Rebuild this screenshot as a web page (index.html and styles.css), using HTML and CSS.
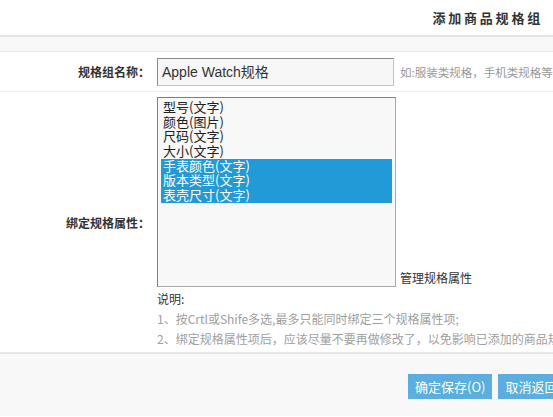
FILE: index.html
```html
<!DOCTYPE html>
<html lang="zh">
<head>
<meta charset="utf-8">
<link rel="stylesheet" href="styles.css">
</head>
<body>
<div class="page">
  <div class="header"><h1 class="title">添加商品规格组</h1></div>
  <div class="band"></div>
  <div class="row row-name">
    <div class="label">规格组名称：</div>
    <div class="field">
      <div class="input">Apple Watch规格</div>
      <span class="hint">如:服装类规格，手机类规格等</span>
    </div>
  </div>
  <div class="row row-attr">
    <div class="label">绑定规格属性：</div>
    <div class="field col">
      <div class="select-line">
        <div class="listbox">
          <div class="opt">型号(文字)</div>
          <div class="opt">颜色(图片)</div>
          <div class="opt">尺码(文字)</div>
          <div class="opt">大小(文字)</div>
          <div class="opt sel">手表颜色(文字)</div>
          <div class="opt sel">版本类型(文字)</div>
          <div class="opt sel">表壳尺寸(文字)</div>
        </div>
        <span class="manage">管理规格属性</span>
      </div>
      <div class="notes">
        <div class="note-title">说明:</div>
        <div class="note">1、按Crtl或Shife多选,最多只能同时绑定三个规格属性项;</div>
        <div class="note">2、绑定规格属性项后，应该尽量不要再做修改了，以免影响已添加的商品规格属性</div>
      </div>
    </div>
  </div>
  <div class="footer">
    <button class="btn">确定保存(O)</button>
    <button class="btn">取消返回</button>
  </div>
</div>
</body>
</html>
```
FILE: styles.css
```css
html, body {
  margin: 0;
  padding: 0;
  background: #fff;
  overflow: hidden;
}
body {
  font-family: "Noto Sans CJK SC", "Liberation Sans", sans-serif;
  color: #333;
  width: 553px;
  height: 417px;
}
.page {
  width: 553px;
  overflow: hidden;
}
.header {
  height: 35px;
  border-bottom: 2px solid #e3e3e3;
  display: flex;
  justify-content: flex-end;
  align-items: center;
}
.title {
  margin: 0 10px 0 0;
  font-size: 13px;
  font-weight: bold;
  letter-spacing: 2.8px;
  color: #333;
  line-height: 1;
}
.band {
  height: 14px;
  background: #f8f8f8;
  border-bottom: 1px solid #e6e6e6;
}
.row {
  display: flex;
  border-bottom: 1px solid #ececec;
}
.label {
  width: 150px;
  flex: none;
  text-align: right;
  font-size: 12px;
  font-weight: bold;
  color: #333;
  align-self: center;
}
.field {
  margin-left: 7px;
  display: flex;
  align-items: center;
  white-space: nowrap;
}
.row-name {
  height: 39px;
}
.row-name .field {
  padding-top: 1px;
}
.input {
  width: 231px;
  height: 26px;
  border: 1px solid #c4c4c4;
  border-top-color: #8a8a8a;
  border-left-color: #8a8a8a;
  background: #f7f7f7;
  font-family: "Liberation Sans", "Noto Sans CJK SC", sans-serif;
  font-size: 14px;
  line-height: 26px;
  padding-left: 4px;
  color: #333;
}
.hint {
  margin-left: 6px;
  font-size: 11.5px;
  color: #999;
}
.row-attr {
  height: 260px;
  border-bottom: 2px solid #e6e6e6;
}
.col {
  flex-direction: column;
  align-items: flex-start;
  padding-top: 5px;
}
.select-line {
  display: flex;
  align-items: flex-end;
}
.listbox {
  border: 1px solid #a9a9a9;
  border-top-color: #7f7f7f;
  border-left-color: #7f7f7f;
  background: #f8f8f8;
  padding: 2px 3px 0 3px;
  box-sizing: border-box;
  height: 190px;
  width: 239px;
}
.opt {
  font-size: 13px;
  line-height: 14.7px;
  height: 14.7px;
  padding-left: 2px;
  color: #222;
}
.opt.sel {
  background: #229ad7;
  color: #fff;
}
.manage {
  margin-left: 4px;
  font-size: 12px;
  line-height: 14px;
  margin-bottom: 2px;
}
.notes {
  margin-top: 2px;
  font-size: 12px;
  line-height: 20px;
}
.note-title {
  color: #333;
}
.note {
  font-size: 12px;
  color: #a0a0a0;
}
.footer {
  height: 62px;
  background: #f8f8f8;
  display: flex;
  align-items: flex-start;
  padding: 20px 0 0 408px;
  box-sizing: border-box;
  gap: 6px;
  white-space: nowrap;
}
.btn {
  flex: none;
  height: 25px;
  padding: 0 7px;
  border: 0;
  background: #5aaee0;
  color: #fff;
  font-family: "Noto Sans CJK SC", sans-serif;
  font-size: 13px;
  letter-spacing: 0;
}
```
